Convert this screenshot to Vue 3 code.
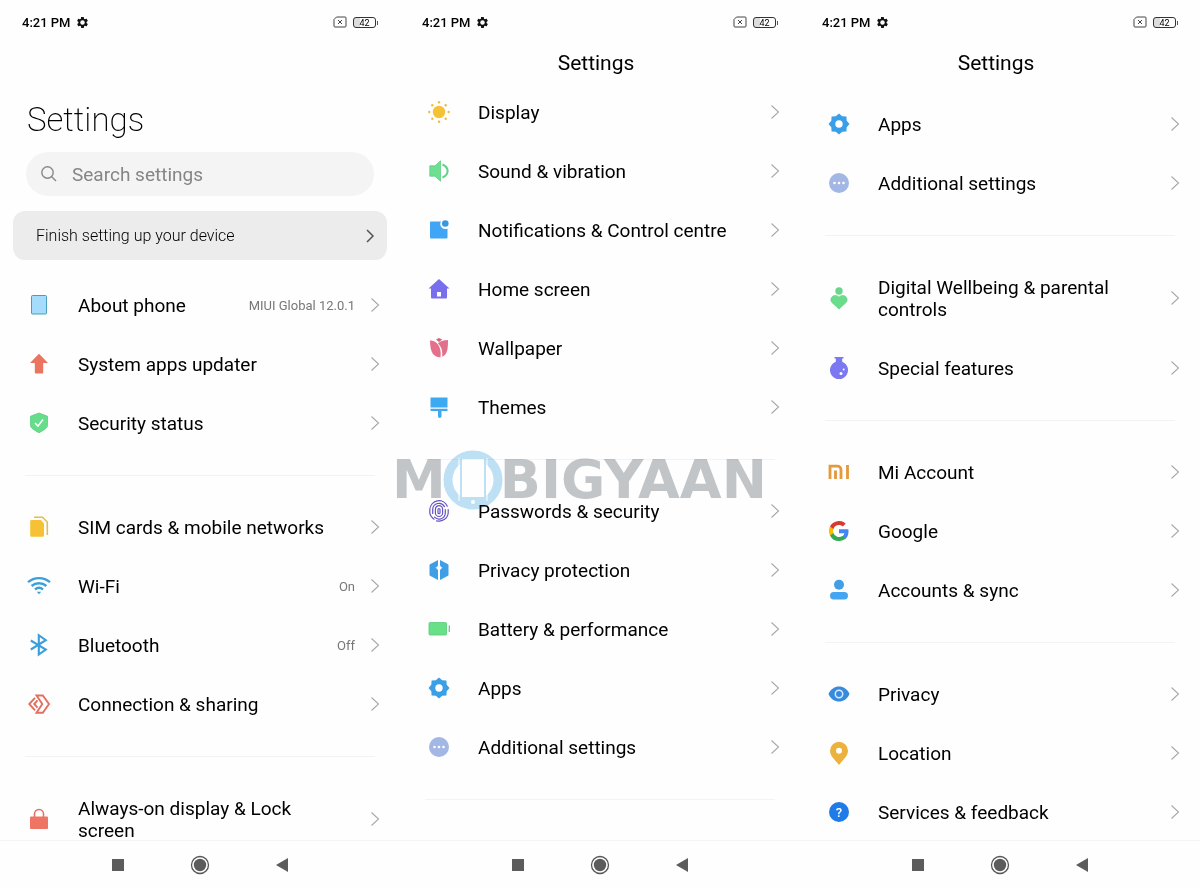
<template>
  <div class="page">
    <main class="screens">
      <section v-for="screen in screens" :key="screen.id" class="screen">
        <div class="status-bar">
          <span class="clock">4:21 PM</span>
          <svg class="gear" viewBox="0 0 24 24" aria-hidden="true">
            <path fill-rule="evenodd" d="M19.4 13a7.500 7.500 0 0 0 0-2l2.200-1.700a.5.5 0 0 0 .1-.7l-2-3.400a.5.5 0 0 0-.7-.2l-2.500 1a7.300 7.300 0 0 0-1.700-1l-.4-2.600a.5.5 0 0 0-.5-.4h-4a.5.5 0 0 0-.5.4L9 5a8 8 0 0 0-1.700 1l-2.500-1a.5.5 0 0 0-.6.200l-2 3.400a.5.5 0 0 0 .1.700L4.500 11a7.900 7.900 0 0 0 0 2l-2.100 1.700a.5.5 0 0 0-.1.700l2 3.400c.1.200.4.300.6.200l2.500-1c.5.400 1.100.700 1.700 1l.4 2.600c0 .200.200.400.5.400h4c.200 0 .5-.2.500-.4l.4-2.600a7 7 0 0 0 1.700-1l2.500 1c.200.100.5 0 .6-.2l2-3.400a.5.5 0 0 0-.1-.7zM12 16.200a4.200 4.200 0 1 1 0-8.400 4.200 4.200 0 0 1 0 8.400z" />
          </svg>
          <span class="spacer"></span>
          <svg class="sim" viewBox="0 0 14 12" aria-hidden="true">
            <path d="M3.500 1H12a1 1 0 0 1 1 1v8a1 1 0 0 1-1 1H2a1 1 0 0 1-1-1V3.500z" />
            <path d="M5 4l4 4M9 4l-4 4" />
          </svg>
          <span class="battery">42</span>
        </div>

        <header v-if="screen.search" class="large-header">
          <h1>Settings</h1>
          <label class="search">
            <svg viewBox="0 0 18 18" aria-hidden="true">
              <circle cx="7.500" cy="7.500" r="5.700" />
              <path d="M11.700 11.700l4.300 4.300" />
            </svg>
            <input type="text" v-model="query" placeholder="Search settings" aria-label="Search settings">
          </label>
          <button type="button" class="banner">
            <span>Finish setting up your device</span>
            <svg class="chevron" viewBox="0 0 10 14" aria-hidden="true"><path d="M2 1l6 6-6 6" /></svg>
          </button>
        </header>
        <header v-else class="small-header">
          <h1>Settings</h1>
        </header>

        <div class="list" :class="screen.id">
          <ul v-for="(group, index) in screen.groups" :key="index" class="group">
            <li v-for="item in group" :key="item.label">
              <button type="button" class="row">
                <svg class="icon" viewBox="0 0 24 24" aria-hidden="true" v-html="icons[item.icon]"></svg>
                <span class="label">{{ item.label }}</span>
                <span class="value">{{ item.value }}</span>
                <svg class="chevron" viewBox="0 0 10 16" aria-hidden="true"><path d="M1.500 1.500L8.500 8l-7 6.500" /></svg>
              </button>
            </li>
          </ul>
        </div>

        <nav class="nav-bar">
          <button type="button" aria-label="Recent apps">
            <svg class="nav-small" viewBox="0 0 12 12"><path d="M0 0h12v12H0z" /></svg>
          </button>
          <button type="button" aria-label="Home">
            <svg class="nav-home" viewBox="0 0 20 20">
              <circle class="ring" cx="10" cy="10" r="8.500" />
              <circle cx="10" cy="10" r="6.200" />
            </svg>
          </button>
          <button type="button" aria-label="Back">
            <svg class="nav-small" viewBox="0 0 12 14"><path d="M12 0v14L0 7z" /></svg>
          </button>
        </nav>
      </section>
    </main>

    <div class="watermark">
      <span>M</span>
      <svg viewBox="0 0 62 62" aria-hidden="true">
        <circle cx="31" cy="31" r="25" fill="none" stroke="#bfe1f5" stroke-width="9" />
        <path d="M19 9h24v43H19z" fill="#fff" stroke="#bfe1f5" stroke-width="2" />
        <path d="M17 9v43M45 9v43" stroke="#fff" stroke-width="1" />
        <path d="M19 48h24v5H19z" fill="#bfe1f5" />
        <circle cx="31" cy="53" r="2" fill="#fff" />
      </svg>
      <span>BIGYAAN</span>
    </div>
  </div>
</template>

<script setup>
import { ref } from 'vue';

const query = ref('');

const icons = {
  phone: '<rect x="4.500" y="2.500" width="15" height="18.500" rx="1" fill="#a6dcfb" stroke="#4a9dbd"/>',
  arrow: '<path d="M12 1.700l9 9.300h-4.800v9.500a1 1 0 0 1-1 1H8.800a1 1 0 0 1-1-1V11H3z" fill="#ea7460"/>',
  shield: '<path d="M12 2l8.500 3.200v9.300c0 2.800-4.500 5-8.500 7.300-4-2.300-8.500-4.500-8.500-7.300V5.200z" fill="#65dd8b" stroke="#50c878" stroke-width=".7"/><path d="M8 12l3 3 5-6.500" fill="none" stroke="#fff" stroke-width="1.500"/>',
  sim: '<path d="M7 2.200h8.500L20.300 7v13" fill="none" stroke="#e2bd55" stroke-width="1.600"/><path d="M4.500 5h9.300L17 8.500v12a1.300 1.300 0 0 1-1.300 1.300H4.500A1.300 1.300 0 0 1 3.200 20.500V6.300A1.300 1.300 0 0 1 4.500 5z" fill="#f6c135"/>',
  wifi: '<g fill="none" stroke="#3b9fdc" stroke-width="2.400"><path d="M1 8.200c6.300-5.500 15.700-5.500 22 0"/><path d="M4.600 12c4.200-3.700 10.600-3.700 14.800 0"/><path d="M8 15.500c2.400-2 5.600-2 8 0"/></g><path d="M9.800 17.800h4.400L12 20.200z" fill="#3b9fdc"/>',
  bluetooth: '<path d="M3.800 7.500l15 9-7 5V2.200l7 5-15 9.300" fill="none" stroke="#3b9fdc" stroke-width="2.100"/>',
  share: '<g fill="none" stroke="#e2705e" stroke-width="1.900"><path d="M9.500 3.500h6.300l6.200 8.500-6.200 8.700H9.500L15.300 12z"/><path d="M8 5.800L2.300 12 8 18.300"/><path d="M10.500 8.300L7.200 12l3.300 3.700"/></g>',
  lock: '<path d="M7.500 10V7a4.500 4.500 0 0 1 9 0v3" fill="none" stroke="#e2705e" stroke-width="1.500"/><rect x="3" y="9.500" width="18" height="12.500" rx="1" fill="#ee7463"/>',
  sun: '<circle cx="12" cy="12" r="6.200" fill="#f6c135"/><g fill="#efbc3f"><circle cx="12" cy="2.300" r="1.200"/><circle cx="12" cy="21.700" r="1.200"/><circle cx="2.300" cy="12" r="1.200"/><circle cx="21.700" cy="12" r="1.200"/><circle cx="5.300" cy="5.300" r="1.200"/><circle cx="18.700" cy="5.300" r="1.200"/><circle cx="5.300" cy="18.700" r="1.200"/><circle cx="18.700" cy="18.700" r="1.200"/></g>',
  sound: '<path d="M2.800 6.800H8l5.500-5v20.400L8 17.200H2.800z" fill="#6ce090" stroke="#55cc7c" stroke-width=".7"/><path d="M15.500 5.500c6.800 3 6.800 10 0 13" fill="none" stroke="#5ed285" stroke-width="2"/>',
  notify: '<path d="M4 3.500h10a5 5 0 0 0 6.500 7v9a1 1 0 0 1-1 1H4a1 1 0 0 1-1-1v-15a1 1 0 0 1 1-1z" fill="#41a5f5"/><circle cx="18.300" cy="5.500" r="3.300" fill="#3798dc"/>',
  home: '<path fill-rule="evenodd" d="M12 2l10.500 9.500H20V20.500a1 1 0 0 1-1 1H5a1 1 0 0 1-1-1v-9H1.500zM10 15v4.500h4V15z" fill="#796fee"/>',
  tulip: '<path d="M3 4.500c5.500-.3 12 5 10.500 16.700C7 21.500 3 17 3 4.500z" fill="#e5708b"/><path d="M21 4c0 9-.6 14.500-5.800 16.700.6-6-.7-9.500-4.200-13.400 2.500-2.300 6-3.300 10-3.300z" fill="#e0708c"/><path d="M9 3.600L12 2l3.200 1.600L12 6z" fill="#d7607c"/>',
  brush: '<path d="M3.500 2.500h17v10h-17zM3.500 13.800h17v2.200h-6v5.200a1.700 1.700 0 0 1-3.500 0V16H3.500z" fill="#3ea9f3"/>',
  finger: '<g fill="none" stroke="#6554c4" stroke-width="1.200" stroke-linecap="round"><path d="M20.300 7.200A9.200 9.600 0 0 0 2.800 10.500v3.500a9.200 9.200 0 0 0 4.200 6.200M21.200 10.500v3.500a9.200 9.200 0 0 1-11.700 7.800"/><path d="M5.700 14.500v-4.200a6.300 6.300 0 0 1 11.800-2.700M18.300 10.500v3.700a6.300 6.300 0 0 1-10.800 4"/><rect x="8.400" y="6.700" width="7.200" height="10.800" rx="3.600"/><rect x="11" y="9.500" width="2" height="5.200" rx="1"/></g>',
  privacy: '<path fill-rule="evenodd" d="M11 2v5.200a4 4 0 0 1-2.600 2.600 4 4 0 0 1 2.600 2.500V22l-8-4.300a1 1 0 0 1-.5-.9V7.200a1 1 0 0 1 .5-.9zM13 2l8 4.300a1 1 0 0 1 .5.9v9.600a1 1 0 0 1-.5.9L13 22v-9.700a4 4 0 0 1 2.600-2.500A4 4 0 0 1 13 7.200z" fill="#3f9fe6"/>',
  battery: '<rect x="2" y="5.500" width="17.500" height="12.500" rx="1" fill="#68e087" stroke="#55cc78" stroke-width=".8"/><path d="M22.300 8.500v6.500" stroke="#64c984" stroke-width="1.300"/>',
  apps: '<path fill-rule="evenodd" d="M12 1.500l3.200 2.800 4.200.3.300 4.200 2.800 3.200-2.800 3.200-.3 4.200-4.200.3-3.200 2.800-3.200-2.800-4.200-.3-.3-4.200L1.500 12l2.800-3.200.3-4.200 4.200-.3zM12 8.300a3.700 3.700 0 1 0 0 7.400 3.700 3.700 0 0 0 0-7.400z" fill="#3b9fe8"/>',
  more: '<circle cx="12" cy="12" r="10" fill="#a3b7e5"/><g fill="#fff"><circle cx="7.500" cy="12" r="1.300"/><circle cx="12" cy="12" r="1.300"/><circle cx="16.500" cy="12" r="1.300"/></g>',
  wellbeing: '<circle cx="12" cy="5" r="3.700" fill="#69d68c"/><path d="M12 11.200c2-2.300 5-2.200 6.800-.5 1.900 1.900 1.700 4.400 0 6.100L12 23l-6.800-6.200c-1.700-1.700-1.900-4.200 0-6.100 1.800-1.700 4.800-1.800 6.800.5z" fill="#69dd8c" stroke="#55c97a" stroke-width=".6"/>',
  flask: '<path d="M7.500 1h9v1.500h-1.300v3.200a9 9 0 1 1-6.400 0V2.500H7.500z" fill="#7b78f2"/><circle cx="14" cy="17.500" r="1.500" fill="#fff"/><circle cx="16.700" cy="13.500" r="1" fill="#fff"/>',
  mi: '<g fill="none" stroke="#e3993c" stroke-width="2.800"><path d="M3 19V6.200h7.500a3.500 3.500 0 0 1 3.500 3.500V19"/><path d="M8.500 10.500V19M20.500 5v14"/></g>',
  google: '<path d="M21.500 12.200c0-.7-.1-1.300-.2-1.900H12v3.900h5.400a4.600 4.600 0 0 1-2 3v2.600h3.300c1.900-1.800 2.800-4.400 2.800-7.600z" fill="#4285f4"/><path d="M12 22c2.700 0 5-.9 6.700-2.400l-3.300-2.500a6 6 0 0 1-9-3.200H3v2.600A10 10 0 0 0 12 22z" fill="#34a853"/><path d="M6.400 13.900a6 6 0 0 1 0-3.800V7.500H3a10 10 0 0 0 0 9z" fill="#fbbc05"/><path d="M12 6c1.500 0 2.800.5 3.800 1.500l2.900-2.900A10 10 0 0 0 3 7.500l3.400 2.600A6 6 0 0 1 12 6z" fill="#d9382e"/>',
  person: '<circle cx="12" cy="6.800" r="5" fill="#409fe6"/><rect x="3" y="14" width="18" height="7.500" rx="3.700" fill="#44a6f2"/>',
  eye: '<path d="M1.500 12C5.500 2 18.500 2 22.500 12 18.500 22 5.500 22 1.500 12z" fill="#388bdc"/><circle cx="12" cy="12" r="3.700" fill="none" stroke="#d6ecff" stroke-width="1.500"/>',
  pin: '<path fill-rule="evenodd" d="M12 .8a9 9 0 0 1 9 9c0 5.200-5.200 9.300-9 14.200C8.200 19.100 3 15 3 9.800a9 9 0 0 1 9-9zm0 6a3 3 0 1 0 0 6 3 3 0 0 0 0-6z" fill="#edb13e"/>',
  help: '<circle cx="12" cy="12" r="10" fill="#1f7be8"/><text x="12" y="16.500" text-anchor="middle" font-size="13" font-weight="500" fill="#fff">?</text>',
};

const screens = [
  {
    id: 'first',
    search: true,
    groups: [
      [
        { icon: 'phone', label: 'About phone', value: 'MIUI Global 12.0.1' },
        { icon: 'arrow', label: 'System apps updater' },
        { icon: 'shield', label: 'Security status' },
      ],
      [
        { icon: 'sim', label: 'SIM cards & mobile networks' },
        { icon: 'wifi', label: 'Wi-Fi', value: 'On' },
        { icon: 'bluetooth', label: 'Bluetooth', value: 'Off' },
        { icon: 'share', label: 'Connection & sharing' },
      ],
      [
        { icon: 'lock', label: 'Always-on display & Lock screen' },
      ],
    ],
  },
  {
    id: 'second',
    groups: [
      [
        { icon: 'sun', label: 'Display' },
        { icon: 'sound', label: 'Sound & vibration' },
        { icon: 'notify', label: 'Notifications & Control centre' },
        { icon: 'home', label: 'Home screen' },
        { icon: 'tulip', label: 'Wallpaper' },
        { icon: 'brush', label: 'Themes' },
      ],
      [
        { icon: 'finger', label: 'Passwords & security' },
        { icon: 'privacy', label: 'Privacy protection' },
        { icon: 'battery', label: 'Battery & performance' },
        { icon: 'apps', label: 'Apps' },
        { icon: 'more', label: 'Additional settings' },
      ],
      [],
    ],
  },
  {
    id: 'third',
    groups: [
      [
        { icon: 'apps', label: 'Apps' },
        { icon: 'more', label: 'Additional settings' },
      ],
      [
        { icon: 'wellbeing', label: 'Digital Wellbeing & parental controls' },
        { icon: 'flask', label: 'Special features' },
      ],
      [
        { icon: 'mi', label: 'Mi Account' },
        { icon: 'google', label: 'Google' },
        { icon: 'person', label: 'Accounts & sync' },
      ],
      [
        { icon: 'eye', label: 'Privacy' },
        { icon: 'pin', label: 'Location' },
        { icon: 'help', label: 'Services & feedback' },
      ],
    ],
  },
];
</script>

<style>
body {
  margin: 0;
  background: #fefefe;
}
</style>

<style scoped>
.page {
  position: relative;
  font-family: Roboto, 'Liberation Sans', sans-serif;
  color: #000;
}

.screens {
  display: flex;
  height: 100vh;
}

.screen {
  flex: 1;
  min-width: 0;
  display: flex;
  flex-direction: column;
}

button {
  border: none;
  background: none;
  padding: 0;
  font: inherit;
  color: inherit;
  text-align: left;
  cursor: pointer;
}

h1 {
  margin: 0;
}

.status-bar {
  display: flex;
  align-items: center;
  height: 44px;
  padding: 0 22px;
  flex-shrink: 0;
}

.clock {
  font-size: 13px;
  font-weight: 500;
}

.gear {
  width: 13px;
  height: 13px;
  margin-left: 5px;
  fill: #111;
}

.spacer {
  flex: 1;
}

.sim {
  width: 14px;
  height: 12px;
  fill: none;
  stroke: #444;
}

.battery {
  position: relative;
  width: 21px;
  height: 9px;
  margin-left: 6px;
  margin-right: 2px;
  border: 1px solid #333;
  border-radius: 3px;
  background: linear-gradient(to right, #ddd 30%, transparent 30%);
  font-size: 9px;
  line-height: 10px;
  text-align: center;
}

.battery::after {
  content: '';
  position: absolute;
  right: -3px;
  top: 3px;
  width: 1px;
  height: 4px;
  background: #555;
}

.large-header {
  display: flex;
  flex-direction: column;
  padding: 54px 13px 16px;
}

.large-header h1 {
  margin: 0 14px 10px;
  font-size: 33px;
  font-weight: 200;
  line-height: 44px;
}

.search {
  display: flex;
  align-items: center;
  gap: 14px;
  height: 44px;
  margin: 0 13px 15px;
  padding: 0 14px;
  border-radius: 22px;
  background: #f4f4f4;
}

.search svg {
  width: 18px;
  height: 18px;
  fill: none;
  stroke: #888;
  stroke-width: 1.4;
}

.search input {
  flex: 1;
  min-width: 0;
  padding: 0;
  border: none;
  outline: none;
  background: none;
  font-family: inherit;
  font-size: 19px;
  font-weight: 450;
}

.search input::placeholder {
  color: #858585;
  opacity: 1;
}

.banner {
  display: flex;
  align-items: center;
  justify-content: space-between;
  height: 49px;
  padding: 0 12px 0 23px;
  border-radius: 12px;
  background: #ececec;
  font-size: 16px;
  font-weight: 300;
  color: #000;
}

.banner .chevron {
  width: 10px;
  height: 14px;
  stroke: #555;
  stroke-width: 1.5;
}

.small-header {
  height: 39px;
  padding-right: 8px;
  text-align: center;
}

.small-header h1 {
  font-size: 21px;
  font-weight: 450;
  line-height: 39px;
}

.list {
  flex: 1;
  min-height: 0;
  overflow: hidden;
}

.list.third {
  padding-top: 12px;
}

.group {
  list-style: none;
  margin: 0;
  padding: 0;
}

.group + .group::before {
  content: '';
  display: block;
  height: 1px;
  margin: 22px 25px;
  background: #f3f3f3;
}

.row {
  display: flex;
  align-items: center;
  width: 100%;
  padding: 19px 20px 18px 27px;
  line-height: 22px;
}

.row svg {
  margin-top: -2px;
  margin-bottom: 0;
}

.icon {
  flex-shrink: 0;
  width: 24px;
  height: 24px;
  margin-right: 27px;
}

.label {
  max-width: 256px;
  font-size: 19px;
  font-weight: 450;
}

.value {
  flex: 1;
  padding: 0 15px;
  font-size: 13px;
  text-align: right;
  white-space: nowrap;
  color: #777;
}

.chevron {
  flex-shrink: 0;
  width: 10px;
  height: 16px;
  fill: none;
  stroke: #a8a8a8;
  stroke-width: 1.1;
}

.nav-bar {
  display: flex;
  align-items: center;
  justify-content: center;
  gap: 66px;
  height: 48px;
  flex-shrink: 0;
  border-top: 1px solid #f4f4f4;
}

.nav-bar svg {
  display: block;
  fill: #5c5c5c;
}

.nav-small {
  width: 12px;
  height: 14px;
}

.nav-home {
  width: 20px;
  height: 20px;
}

.nav-bar .ring {
  fill: none;
  stroke: #555;
  stroke-width: 1.3;
}

.watermark {
  position: absolute;
  left: calc(33% - 4px);
  top: 449px;
  display: flex;
  align-items: center;
  font-family: 'DejaVu Sans', sans-serif;
  font-size: 54px;
  font-weight: 700;
  line-height: 62px;
  color: #c3c6c9;
  mix-blend-mode: multiply;
  pointer-events: none;
}

.watermark svg {
  width: 62px;
  height: 62px;
  margin: 0 -4px;
}
</style>
